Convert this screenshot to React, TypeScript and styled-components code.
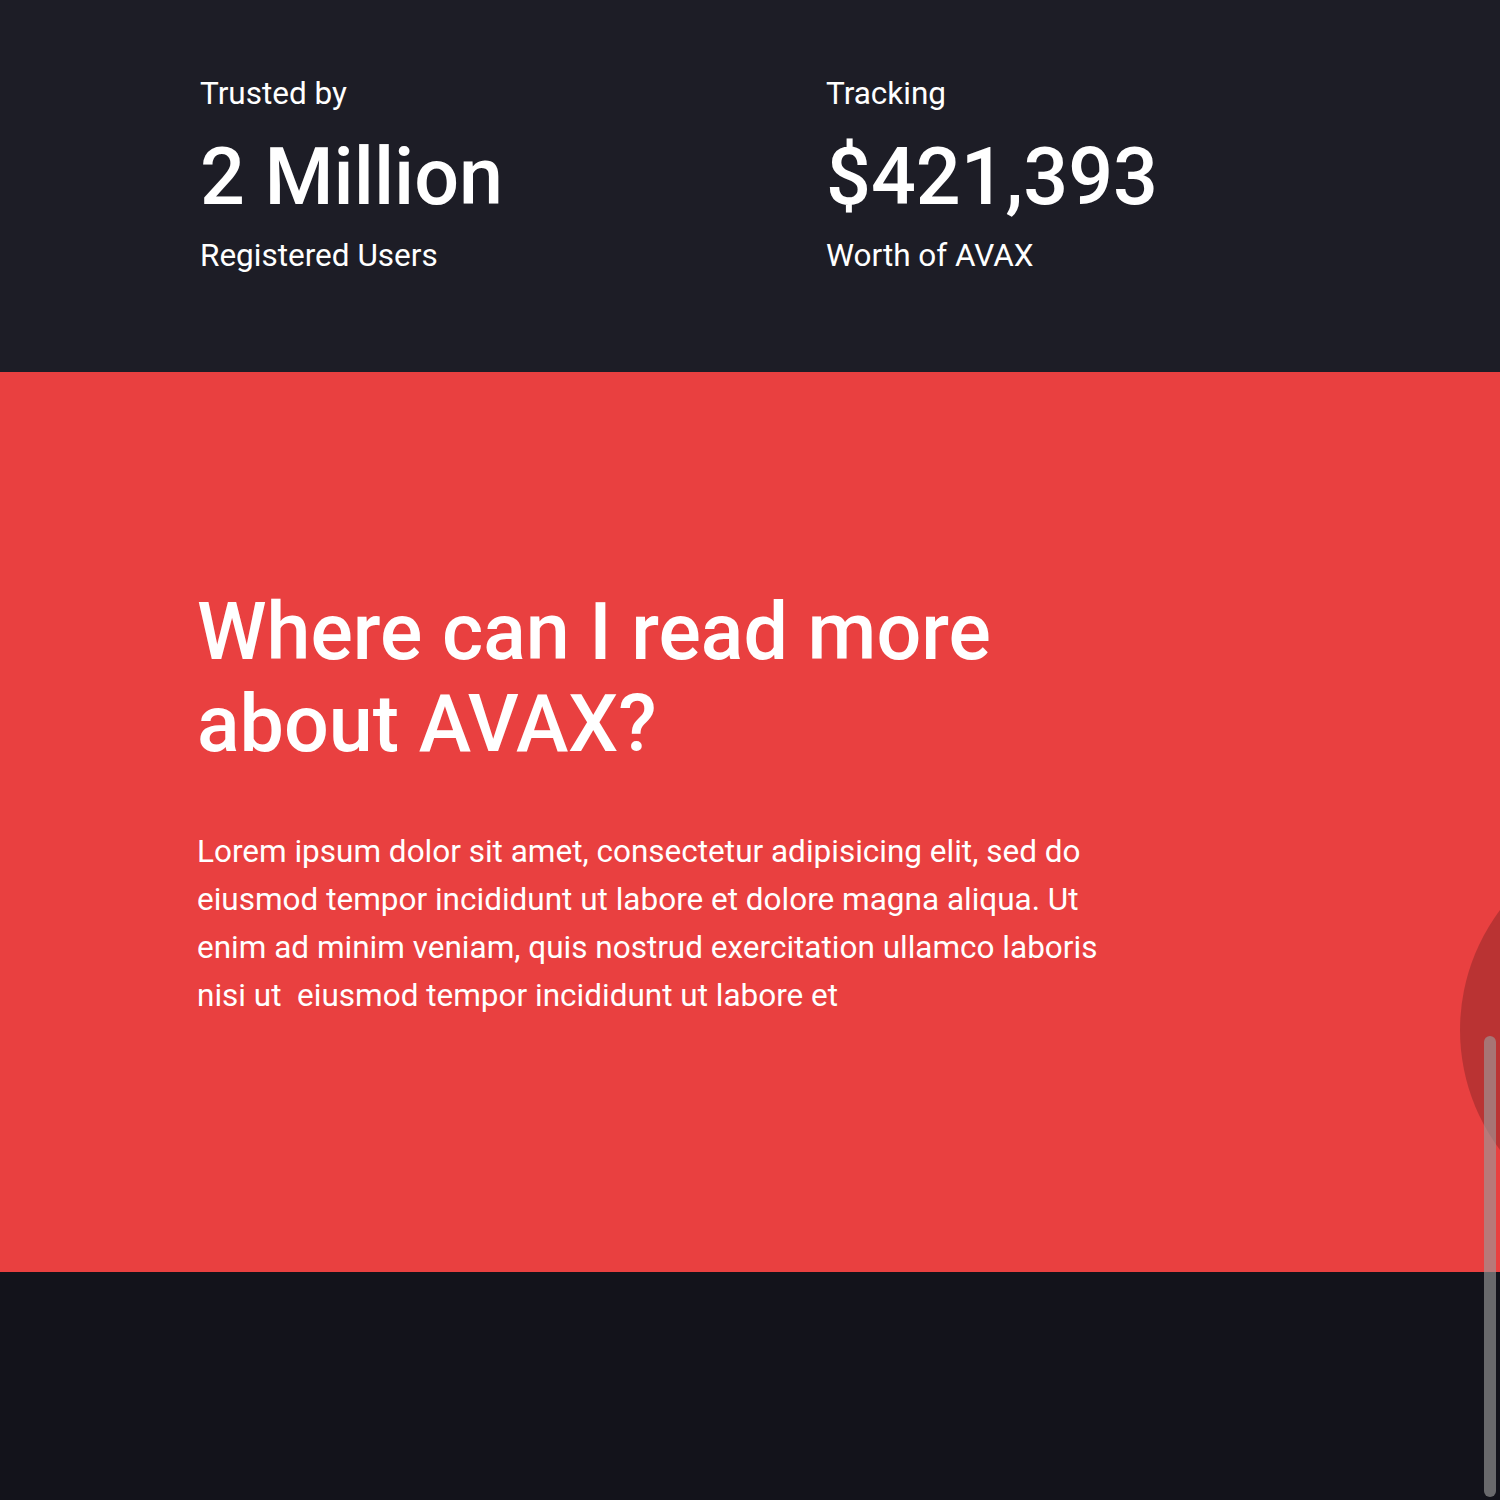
import React from "react";
import styled, { createGlobalStyle } from "styled-components";

const Global = createGlobalStyle`
  html, body { margin: 0; padding: 0; }
  body {
    font-family: Roboto, "Liberation Sans", Arial, sans-serif;
    color: #ffffff;
    background: #13131b;
    overflow: hidden;
  }
  * { box-sizing: border-box; }
`;

const StatsBar = styled.section`
  background: #1d1d26;
  padding: 75px 0 97px 200px;
  display: grid;
  grid-template-columns: 626px 1fr;
`;

const Stat = styled.div`
  display: flex;
  flex-direction: column;
`;

const StatLabel = styled.p`
  margin: 0;
  font-size: 31.5px;
  line-height: 38px;
  font-weight: 400;
`;

const StatValue = styled.h2`
  margin: 16px 0 12px;
  font-size: 79px;
  line-height: 96px;
  font-weight: 500;
`;

const InfoSection = styled.section`
  position: relative;
  overflow: hidden;
  background: #e94040;
  height: 900px;
  padding: 214px 0 0 197px;
`;

const Heading = styled.h1`
  margin: 0;
  font-size: 79px;
  line-height: 92px;
  font-weight: 500;
  max-width: 900px;
`;

const Body = styled.p`
  margin: 58px 0 0;
  font-size: 31.5px;
  line-height: 48px;
  font-weight: 400;
  max-width: 930px;
`;

const Blob = styled.div`
  position: absolute;
  left: 1460px;
  top: 458px;
  width: 400px;
  height: 400px;
  border-radius: 50%;
  background: rgba(0, 0, 0, 0.2);
`;

const Footer = styled.footer`
  background: #13131b;
  height: 228px;
`;

const ScrollThumb = styled.div`
  position: fixed;
  left: 1484px;
  top: 1036px;
  width: 12px;
  height: 461px;
  border-radius: 6px;
  background: rgba(156, 156, 156, 0.63);
`;

export default function App() {
  return (
    <>
      <Global />
      <StatsBar>
        <Stat>
          <StatLabel>Trusted by</StatLabel>
          <StatValue>2 Million</StatValue>
          <StatLabel>Registered Users</StatLabel>
        </Stat>
        <Stat>
          <StatLabel>Tracking</StatLabel>
          <StatValue>$421,393</StatValue>
          <StatLabel>Worth of AVAX</StatLabel>
        </Stat>
      </StatsBar>
      <InfoSection>
        <Heading>
          Where can I read more
          <br />
          about AVAX?
        </Heading>
        <Body>
          Lorem ipsum dolor sit amet, consectetur adipisicing elit, sed do
          eiusmod tempor incididunt ut labore et dolore magna aliqua. Ut enim ad
          minim veniam, quis nostrud exercitation ullamco laboris nisi ut&nbsp;
          eiusmod tempor incididunt ut labore et
        </Body>
        <Blob />
      </InfoSection>
      <Footer />
      <ScrollThumb />
    </>
  );
}
